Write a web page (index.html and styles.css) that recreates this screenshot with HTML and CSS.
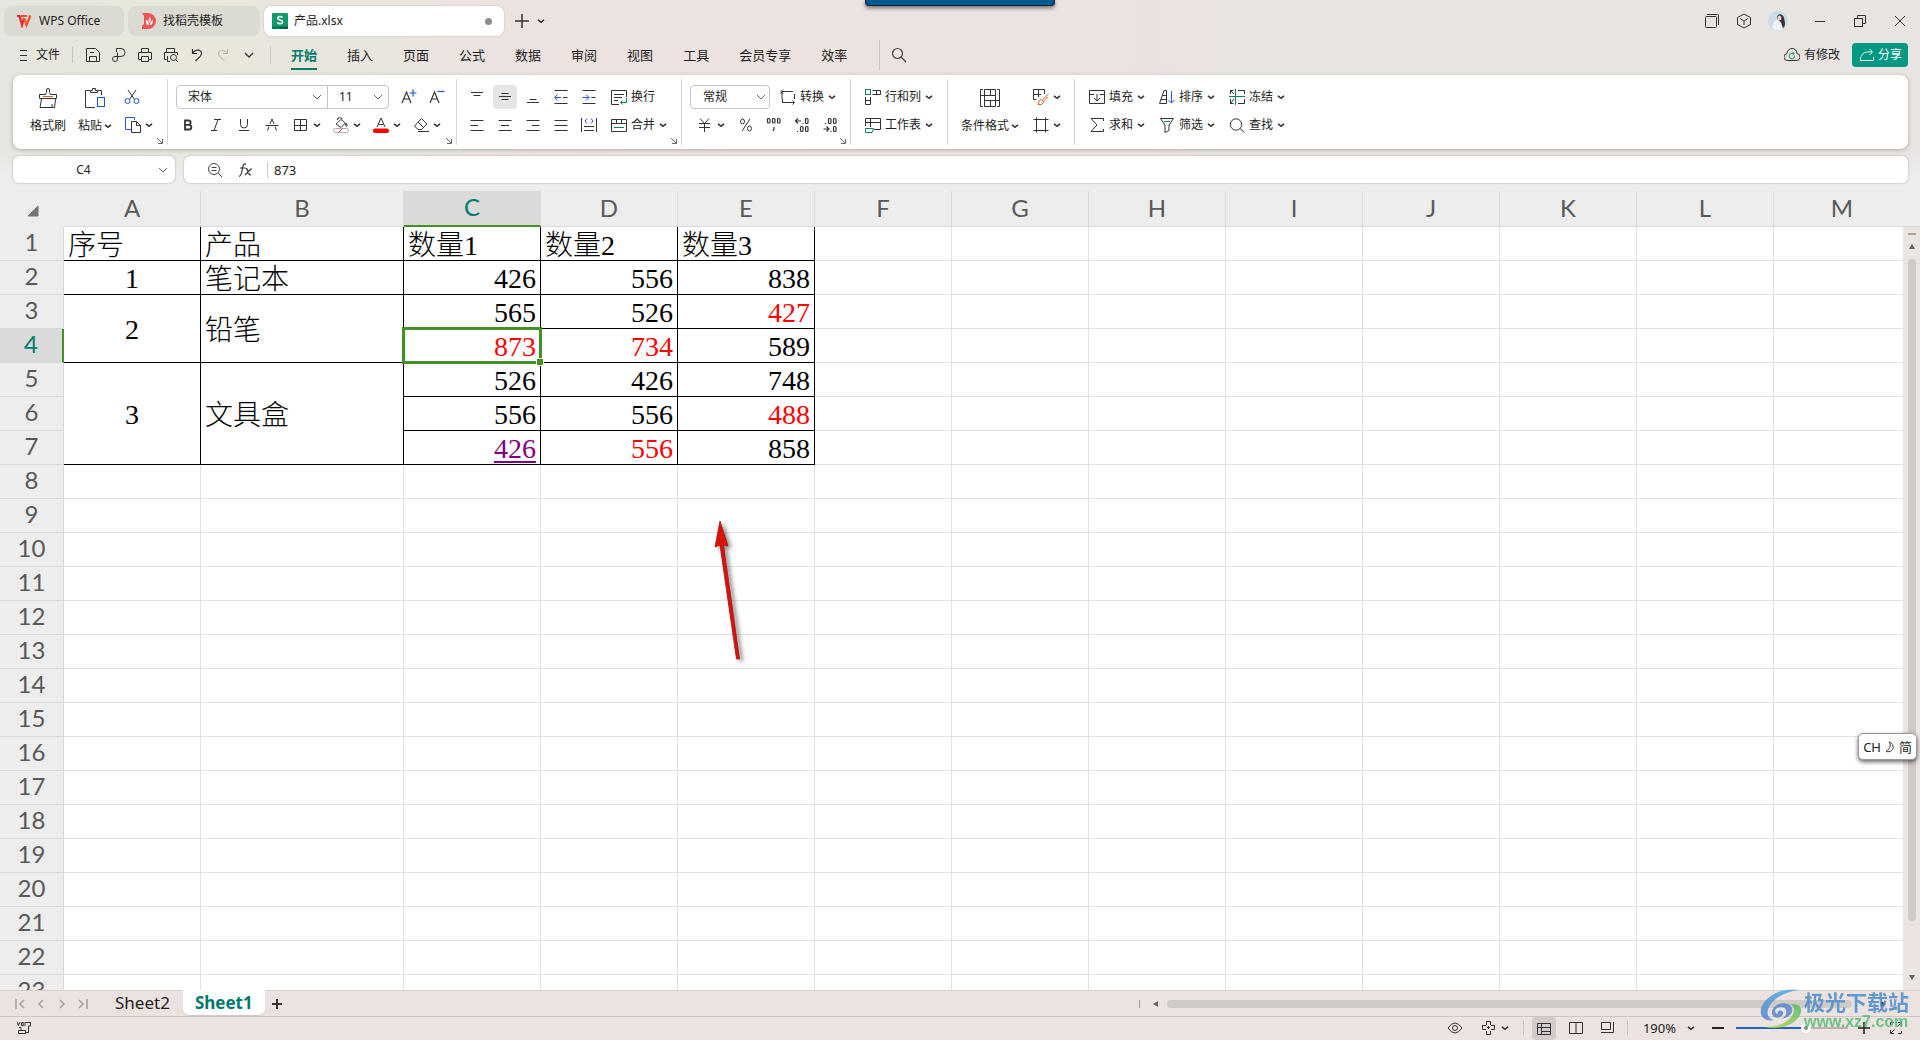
FILE: index.html
```html
<!DOCTYPE html>
<html lang="zh-CN">
<head>
<meta charset="utf-8">
<title>产品.xlsx - WPS Office</title>
<link rel="stylesheet" href="styles.css">
</head>
<body>
<svg class="defs" aria-hidden="true">
  <symbol id="caret" viewBox="0 0 8 8"><path d="M1 2.8 4 5.3 7 2.8" fill="none" stroke="#333" stroke-width="1.6"/></symbol>
  <symbol id="chev" viewBox="0 0 10 10"><path d="M1 3 5 7 9 3" fill="none" stroke="#666"/></symbol>
  <symbol id="launch" viewBox="0 0 8 8"><path d="M1 1 6 6M6.5 2V6.5H2" fill="none" stroke="#666"/></symbol>
</svg>

<header class="titlebar">
  <button class="doc-tab home"><svg width="16" height="14" viewBox="0 0 16 14" fill="none" stroke-width="2.2"><path d="M1 2H3.5L6 11 8 4" stroke="#f5222d"/><path d="M5 2H11M8 4 10.5 11 14.5 1.5" stroke="#ff4d2e"/></svg>WPS Office</button>
  <button class="doc-tab docer"><svg width="14" height="16" viewBox="0 0 14 16"><path d="M0 0H6A8 8 0 0 1 6 16H0V13L2 11V3Z" fill="#f05555"/><path d="M4 7C6 7 6.500 9 7 12 4.500 12 4 10 4 7ZM7.500 4C10 6 8.500 9 7.500 10 6.500 8 6.500 6 7.500 4ZM11 7C11 10 10 12 8 12 8 10 9 8 11 7Z" fill="#fff"/></svg>找稻壳模板</button>
  <button class="doc-tab active"><svg width="16" height="16" viewBox="0 0 16 16"><rect width="16" height="16" rx="1" fill="#12996a"/><path d="M0 13.500H8V16H0Z" fill="#0b7a50"/><path d="M8 13.500H16V16H8Z" fill="#076040"/><path d="M10.500 4.500C9.500 3 5.800 3 5.800 5.200 5.800 7.600 10.500 6.300 10.500 8.900 10.500 11.200 6.500 11.200 5.500 9.500" fill="none" stroke="#fff" stroke-width="1.600"/></svg>产品.xlsx<i class="dot"></i></button>
  <button class="plain" aria-label="新建"><svg width="14" height="14" viewBox="0 0 14 14" fill="none" stroke="#333" stroke-width="1.500"><path d="M7 0V14M0 7H14"/></svg></button>
  <button class="plain" aria-label="标签列表"><svg width="8" height="8"><use href="#caret"/></svg></button>
  <div class="window-tools">
    <button class="plain" aria-label="窗口"><svg width="16" height="16" viewBox="0 0 16 16" fill="none" stroke="#333"><rect x="1.500" y="3.500" width="11" height="11" rx="1"/><path d="M3 1.500H13.500Q14.500 1.500 14.500 2.500V12"/></svg></button>
    <button class="plain" aria-label="应用"><svg width="16" height="16" viewBox="0 0 16 16" fill="none" stroke="#333"><path d="M8 1 14.500 4.500V11.500L8 15 1.500 11.500V4.500ZM4 5.500 8 8 12 5.500M8 8V12"/></svg></button>
    <button class="plain" aria-label="账户"><svg width="20" height="20" viewBox="0 0 20 20"><circle cx="10" cy="10" r="10" fill="#c9dbe4"/><path d="M4 17C5 11 7 8 11 9L15 11 14 19A10 10 0 0 1 4 17Z" fill="#eef3f6"/><path d="M9 7C9 2 15 2 16 7 17 11 18 15 15 17 13 13 14 11 11 10Z" fill="#3b2f38"/><ellipse cx="11.500" cy="7" rx="2" ry="2.500" fill="#ecd2c6"/></svg></button>
    <button class="plain" aria-label="最小化"><svg width="16" height="16" viewBox="0 0 16 16" stroke="#333"><path d="M3 8.500H13"/></svg></button>
    <button class="plain" aria-label="还原"><svg width="16" height="16" viewBox="0 0 16 16" fill="none" stroke="#333"><rect x="2.500" y="5.500" width="8" height="8"/><path d="M5.500 5V2.500H13.500V10.500H11"/></svg></button>
    <button class="plain" aria-label="关闭"><svg width="16" height="16" viewBox="0 0 16 16" stroke="#333"><path d="M3 3 13 13M13 3 3 13"/></svg></button>
  </div>
  <div class="drop-handle"></div>
</header>

<nav class="menubar">
  <button class="file"><svg width="10" height="12" viewBox="0 0 10 12" stroke="#333"><path d="M1 1.500H8M1 6.500H8M1 11.500H8"/></svg>文件</button>
  <div class="quick">
    <button class="plain" aria-label="保存"><svg width="16" height="16" viewBox="0 0 16 16" fill="none" stroke="#333"><path d="M1.500 1.500H10.500L14.500 5.500V14.500H1.500ZM4.500 14V9.500H11.500V14M5 5.500H9"/></svg></button>
    <button class="plain" aria-label="输出为PDF"><svg width="16" height="16" viewBox="0 0 16 16" fill="none" stroke="#333"><path d="M5.500 5V1.500H10A4 4 0 0 1 10 9.500H4A2.500 2.500 0 1 0 6.500 12V5.500"/></svg></button>
    <button class="plain" aria-label="打印"><svg width="16" height="16" viewBox="0 0 16 16" fill="none" stroke="#333"><path d="M4.500 5V1.500H11.500V5M4 12.500H1.500V5.500H14.500V12.500H12M4.500 9.500H11.500V14.500H4.500Z"/></svg></button>
    <button class="plain" aria-label="打印预览"><svg width="16" height="16" viewBox="0 0 16 16" fill="none" stroke="#333"><path d="M3.500 5V1.500H11.500V5M3.500 12.500H1.500V5.500H14.500V8M4.500 9V14.500H7"/><circle cx="10.500" cy="10.500" r="3"/><path d="M13 13 15 15"/></svg></button>
    <button class="plain" aria-label="撤销"><svg width="16" height="16" viewBox="0 0 16 16" fill="none" stroke="#333" stroke-width="1.200"><path d="M3.500 2V6.500H8M3.500 6.500C6 2 13 2 12.500 7 12 10 9 11 6.500 14"/></svg></button>
    <button class="plain" aria-label="恢复"><svg width="16" height="16" viewBox="0 0 16 16" fill="none" stroke="#b8b5b1"><path d="M12.500 2V6.500H8M12.500 6.500C10 2 3 2 3.500 7 4 10 7 11 9.500 14"/></svg></button>
    <button class="plain" aria-label="更多"><svg width="10" height="10" viewBox="0 0 10 10"><path d="M1 3 5 7 9 3" fill="none" stroke="#333" stroke-width="1.300"/></svg></button>
  </div>
  <div class="menus">
    <button class="current">开始</button><button>插入</button><button>页面</button><button>公式</button><button>数据</button><button>审阅</button><button>视图</button><button>工具</button><button>会员专享</button><button>效率</button>
  </div>
  <button class="plain search" aria-label="搜索"><svg width="18" height="18" viewBox="0 0 18 18" fill="none" stroke="#444" stroke-width="1.200"><circle cx="7.500" cy="7.500" r="5"/><path d="M11 11 16 16"/></svg></button>
  <div class="menu-right">
    <button class="changed"><svg width="16" height="14" viewBox="0 0 16 14" fill="none" stroke="#333"><path d="M4 12.500A3.500 3.500 0 0 1 3 5.500 5 5 0 0 1 13 5.500 3.500 3.500 0 0 1 12 12.500Z"/><path d="M10.500 7.500A2.700 2.700 0 1 1 8.500 5.500L10 5.500M8.500 3.800 10.200 5.500 8.500 7" stroke="#12905f"/></svg>有修改</button>
    <button class="share"><svg width="14" height="14" viewBox="0 0 14 14" fill="none" stroke="#fff"><path d="M.5 9V12.500H13.500V9M1.500 8.500C2 5 5 3.500 12 4M9.500 1 12.500 4 9.500 7"/></svg>分享</button>
  </div>
</nav>

<section class="ribbon">
  <div class="group clip">
    <button class="big"><svg width="20" height="20" viewBox="0 0 20 20" fill="none" stroke="#333"><path d="M1.500 6.500H7.500L8.500 4.500V2A1.500 1.500 0 0 1 11.500 2V4.500L12.500 6.500H18.500V10.500H1.500ZM3.500 11 2 19.500H16.500L17.500 11M14 19V16"/><path d="M5 8.500H15" stroke="#d9622b"/></svg>格式刷</button>
    <button class="big"><svg width="20" height="20" viewBox="0 0 20 20" fill="none" stroke="#333"><path d="M5 2.500H.5V19.500H10M13 2.500H16.500V7M5.500 4.500V2.500H7.500V.5H10.500V2.500H12.500V4.500Z"/><rect x="12.500" y="9.500" width="7" height="9" stroke="#1f55d6" fill="#fff"/></svg><span>粘贴<svg width="8" height="8"><use href="#caret"/></svg></span></button>
    <div class="stack">
      <button class="tool" aria-label="剪切"><svg width="16" height="16" viewBox="0 0 16 16" fill="none" stroke="#333"><path d="M4 1 10.500 10.500M12 1 5.500 10.500"/><g stroke="#1f55d6"><circle cx="3.500" cy="12" r="2.500"/><circle cx="12.500" cy="12" r="2.500"/></g></svg></button>
      <button class="tool drop" aria-label="复制"><svg width="16" height="16" viewBox="0 0 16 16" fill="none" stroke="#333"><path d="M6 12.500H.5V.5H9.500V3" stroke="#1f55d6"/><path d="M6.500 4.500H11.500L15.500 8.500V15.500H6.500ZM11.500 4.500V8.500H15.500"/></svg><svg width="8" height="8"><use href="#caret"/></svg></button>
    </div>
    <button class="launcher" aria-label="剪贴板设置"><svg width="8" height="8"><use href="#launch"/></svg></button>
  </div>

  <div class="group font">
    <div class="stack">
      <div class="row">
        <div class="font-box">
          <label class="combo family"><select aria-label="字体"><option>宋体</option></select><svg width="10" height="10"><use href="#chev"/></svg></label>
          <label class="combo size"><select aria-label="字号"><option>11</option></select><svg width="10" height="10"><use href="#chev"/></svg></label>
        </div>
        <button class="tool" aria-label="增大字号"><svg width="16" height="16" viewBox="0 0 16 16" fill="none" stroke="#333" stroke-width="1.200"><path d="M1 14 5.500 3 10 14M2.500 10H8.500"/><path d="M8.500 4H15.500M12 .5V7.500" stroke="#1f55d6"/></svg></button>
        <button class="tool" aria-label="减小字号"><svg width="16" height="16" viewBox="0 0 16 16" fill="none" stroke="#333" stroke-width="1.200"><path d="M1 14 5.500 3 10 14M2.500 10H8.500"/><path d="M8.500 2.500H15.500" stroke="#1f55d6"/></svg></button>
      </div>
      <div class="row">
        <button class="tool" aria-label="加粗"><svg width="16" height="16" viewBox="0 0 16 16" fill="none" stroke="#333" stroke-width="1.800"><path d="M5 3.500H8.500A2 2 0 0 1 8.500 7.800H5ZM5 7.800H9A2.300 2.300 0 0 1 9 12.500H5Z"/></svg></button>
        <button class="tool" aria-label="倾斜"><svg width="16" height="16" viewBox="0 0 16 16" fill="none" stroke="#333"><path d="M6 2.500H13M3 13.500H9M10 2.500 6 13.500"/></svg></button>
        <button class="tool" aria-label="下划线"><svg width="16" height="16" viewBox="0 0 16 16" fill="none" stroke="#333"><path d="M4.500 2V7.500A3.500 3.500 0 0 0 11.500 7.500V2M3 13.500H13"/></svg></button>
        <button class="tool" aria-label="删除线"><svg width="16" height="16" viewBox="0 0 16 16" fill="none" stroke="#333"><path d="M6 7 8 2 10 7M5 9.500 3.500 13.500M11 9.500 12.500 13.500M1.500 8.500H14.500"/></svg></button>
        <button class="tool drop" aria-label="边框"><svg width="16" height="16" viewBox="0 0 16 16" fill="none" stroke="#333"><path d="M1.500 2.500H13.500V13.500H1.500ZM7.500 2.500V13.500M1.500 8.500H13.500"/></svg><svg width="8" height="8"><use href="#caret"/></svg></button>
        <button class="tool drop" aria-label="填充颜色"><svg width="16" height="16" viewBox="0 0 16 16" fill="none" stroke="#333"><path d="M4.500 3V1.500Q7.500-.5 9.500 2M8 2.500 3 7 8 10.500 12.500 6ZM13 6Q15 9 13.500 9.500 12 9 13 6"/><rect x=".5" y="11.500" width="15" height="4" rx="2" stroke="#aaa"/><path d="M6 15 9 12" stroke="#e33"/></svg><svg width="8" height="8"><use href="#caret"/></svg></button>
        <button class="tool drop" aria-label="字体颜色"><svg width="16" height="16" viewBox="0 0 16 16" fill="none" stroke="#333"><path d="M4 10 8 1 12 10M5.500 7.500H10.500"/><rect x="0" y="11.500" width="16" height="4.500" rx="2" fill="red" stroke="none"/></svg><svg width="8" height="8"><use href="#caret"/></svg></button>
        <button class="tool drop" aria-label="清除"><svg width="16" height="16" viewBox="0 0 16 16" fill="none" stroke="#333"><path d="M8.500 1.500 14 7 8.500 12.500H5L1.500 9ZM5 5 10.500 10.500M5 14.500H16"/></svg><svg width="8" height="8"><use href="#caret"/></svg></button>
      </div>
    </div>
    <button class="launcher" aria-label="字体设置"><svg width="8" height="8"><use href="#launch"/></svg></button>
  </div>

  <div class="group">
    <div class="stack">
      <div class="row">
        <button class="tool" aria-label="顶端对齐"><svg width="16" height="16" viewBox="0 0 16 16" stroke="#333"><path d="M2 3.500H14M4.500 6.500H11.500"/></svg></button>
        <button class="tool on" aria-label="垂直居中"><svg width="16" height="16" viewBox="0 0 16 16" stroke="#333"><path d="M4.500 4.500H11.500M2 7.500H14M4.500 10.500H11.500"/></svg></button>
        <button class="tool" aria-label="底端对齐"><svg width="16" height="16" viewBox="0 0 16 16" stroke="#333"><path d="M4.500 10.500H11.500M2 13.500H14"/></svg></button>
        <button class="tool" aria-label="减少缩进"><svg width="16" height="16" viewBox="0 0 16 16" fill="none" stroke="#333"><path d="M1.500 1.500H14.500M1.500 14.500H14.500M10 8.500H14.500"/><path d="M2 8.500H8M4.500 5.500 1.700 8.500 4.500 11.500" stroke="#1f55d6"/></svg></button>
        <button class="tool" aria-label="增加缩进"><svg width="16" height="16" viewBox="0 0 16 16" fill="none" stroke="#333"><path d="M1.500 1.500H14.500M1.500 14.500H14.500M10.500 8.500H14.500"/><path d="M1.500 8.500H8M5 5.500 8 8.500 5 11.500" stroke="#1f55d6"/></svg></button>
        <button class="tool text"><svg width="16" height="16" viewBox="0 0 16 16" fill="none" stroke="#333"><path d="M8 15.500H.5V1.500H15.500V8M3 5.500H13M3 8.500H11M3 11.500H7"/><path d="M15.500 9V13.500H9.500M11.500 11.500 9.500 13.500 11.500 15.500" stroke="#12805c"/></svg>换行</button>
      </div>
      <div class="row">
        <button class="tool" aria-label="左对齐"><svg width="16" height="16" viewBox="0 0 16 16" stroke="#333"><path d="M1.500 3.500H14.500M1.500 8.500H9M1.500 13.500H14.500"/></svg></button>
        <button class="tool" aria-label="水平居中"><svg width="16" height="16" viewBox="0 0 16 16" stroke="#333"><path d="M1.500 3.500H14.500M4 8.500H12M1.500 13.500H14.500"/></svg></button>
        <button class="tool" aria-label="右对齐"><svg width="16" height="16" viewBox="0 0 16 16" stroke="#333"><path d="M1.500 3.500H14.500M7 8.500H14.500M1.500 13.500H14.500"/></svg></button>
        <button class="tool" aria-label="两端对齐"><svg width="16" height="16" viewBox="0 0 16 16" stroke="#333"><path d="M1.500 3.500H14.500M1.500 8.500H14.500M1.500 13.500H14.500"/></svg></button>
        <button class="tool" aria-label="分散对齐"><svg width="16" height="16" viewBox="0 0 16 16" fill="none" stroke="#333"><path d="M.5 1V15M15.500 1V15M3 9.500H13M3 13.500H13"/><path d="M6 1.500 4 4 6 6.500M10 1.500 12 4 10 6.500" stroke="#1f55d6"/></svg></button>
        <button class="tool text"><svg width="16" height="16" viewBox="0 0 16 16" fill="none" stroke="#333"><path d="M.5 2.500H15.500V14.500H.5ZM.5 6.500H15.500M5.500 2V6M10.500 2V6"/><path d="M3 10.500H13" stroke="#12805c"/></svg>合并<svg width="8" height="8"><use href="#caret"/></svg></button>
      </div>
    </div>
    <button class="launcher" aria-label="对齐设置"><svg width="8" height="8"><use href="#launch"/></svg></button>
  </div>

  <div class="group number">
    <div class="stack">
      <div class="row">
        <label class="combo format"><select aria-label="数字格式"><option>常规</option></select><svg width="10" height="10"><use href="#chev"/></svg></label>
        <button class="tool text"><svg width="16" height="16" viewBox="0 0 16 16" fill="none" stroke="#333"><path d="M2 10V2.500H13M2.500 10V13.500H14M14.500 5V10M.5 4.500 2.500 2.500M3 .5 1 2.500 3 4.500M12.500 11.500 14.500 13.500 12.500 15.500"/></svg>转换<svg width="8" height="8"><use href="#caret"/></svg></button>
      </div>
      <div class="row">
        <button class="tool drop" aria-label="货币"><svg width="16" height="16" viewBox="0 0 16 16" fill="none" stroke="#333"><path d="M3 1.500 7.500 6.500 12 1.500M2 6.500H13M2 10.500H13M7.500 6.500V15"/></svg><svg width="8" height="8"><use href="#caret"/></svg></button>
        <div class="row digits">
          <button class="tool" aria-label="百分比"><svg width="16" height="16" viewBox="0 0 16 16" fill="none" stroke="#333"><path d="M12 2 4 14"/><ellipse cx="4.500" cy="4.500" rx="2" ry="2.500"/><ellipse cx="11.500" cy="11.500" rx="2" ry="2.500"/></svg></button>
          <button class="tool" aria-label="千位分隔"><svg width="16" height="16" viewBox="0 0 16 16" fill="none" stroke="#333" stroke-width="1.200"><rect x="1.500" y="1.500" width="2.500" height="4.500" rx="1"/><rect x="6.500" y="1.500" width="2.500" height="4.500" rx="1"/><rect x="11.500" y="1.500" width="2.500" height="4.500" rx="1"/><path d="M8 10V12L7 14"/></svg></button>
          <button class="tool" aria-label="增加小数位"><svg width="16" height="16" viewBox="0 0 16 16" fill="none" stroke="#333" stroke-width="1.200"><path d="M1.500 4H7M4 1.500 1.500 4 4 6.500M9 6V7M3.500 14V15"/><rect x="11.500" y="1.500" width="2.500" height="5" rx="1"/><rect x="6.500" y="9.500" width="2.500" height="5" rx="1"/><rect x="11.500" y="9.500" width="2.500" height="5" rx="1"/></svg></button>
          <button class="tool" aria-label="减少小数位"><svg width="16" height="16" viewBox="0 0 16 16" fill="none" stroke="#333" stroke-width="1.200"><path d="M1.500 12H7M4.500 9.500 7 12 4.500 14.500M9 14V15M3.500 6V7"/><rect x="11.500" y="9.500" width="2.500" height="5" rx="1"/><rect x="6.500" y="1.500" width="2.500" height="5" rx="1"/><rect x="11.500" y="1.500" width="2.500" height="5" rx="1"/></svg></button>
        </div>
      </div>
    </div>
    <button class="launcher" aria-label="数字设置"><svg width="8" height="8"><use href="#launch"/></svg></button>
  </div>

  <div class="group">
    <div class="stack">
      <button class="tool text"><svg width="16" height="16" viewBox="0 0 16 16" fill="none" stroke="#333"><path d="M7.500 1.500H15.500V5.500H7.500M11.500 1.500V5.500M.5 8V15.500H5.500V8M.5 11.500H5.500"/><rect x=".5" y=".5" width="5" height="5" stroke="#12805c"/></svg>行和列<svg width="8" height="8"><use href="#caret"/></svg></button>
      <button class="tool text"><svg width="16" height="16" viewBox="0 0 16 16" fill="none" stroke="#333"><path d="M.5 9V1.500H15.500V12.500H9M.5 5.500H15.500M5.500 1.500V10"/><path d="M.5 11.500H8.500L7 15.500H.5Z" stroke="#12805c"/></svg>工作表<svg width="8" height="8"><use href="#caret"/></svg></button>
    </div>
  </div>

  <div class="group">
    <button class="big wide"><svg width="20" height="20" viewBox="0 0 20 20" fill="none" stroke="#333"><path d="M3 1.500H.5V18.500H3M17 1.500H19.500V18.500H17M4.500 1.500H15.500V18.500H4.500ZM.5 7.500H15.500M4.500 12.500H19.500M10.500 1.500V7.500M10.500 12.500V18.500"/></svg><span>条件格式<svg width="8" height="8"><use href="#caret"/></svg></span></button>
    <div class="stack">
      <button class="tool drop" aria-label="表格样式"><svg width="16" height="16" viewBox="0 0 16 16" fill="none" stroke="#333"><path d="M3.500 10.500H.5V.5H11.500V5M.5 5.500H8M5.500 .5V8"/><path d="M15.500 5 9.500 10.500M15 8 10.500 12M5 15.500Q6 14 6.500 11.500 8 9.500 10 11.500 11.500 14 8.500 15.500Z" stroke="#d9622b"/></svg><svg width="8" height="8"><use href="#caret"/></svg></button>
      <button class="tool drop" aria-label="单元格样式"><svg width="16" height="16" viewBox="0 0 16 16" fill="none" stroke="#333"><path d="M3.500 .5V15.500M12.500 .5V15.500M.5 2.500H15.500M.5 13.500H15.500"/></svg><svg width="8" height="8"><use href="#caret"/></svg></button>
    </div>
  </div>

  <div class="group last">
    <div class="stack">
      <div class="row">
        <button class="tool text"><svg width="16" height="16" viewBox="0 0 16 16" fill="none" stroke="#333"><path d="M5 5.500H.5V1.500H15.500V5.500H11M.5 5V14.500H15.500V5M8 5V12M5 9 8 12 11 9"/></svg>填充<svg width="8" height="8"><use href="#caret"/></svg></button>
        <button class="tool text"><svg width="16" height="16" viewBox="0 0 16 16" fill="none" stroke="#333"><path d="M.5 14.500 5 1.500H7.500V14.500ZM2 10.500H7M3.500 6.500H7"/><path d="M12.500 2V14M9.500 11 12.500 14 15.500 11" stroke="#1f55d6"/></svg>排序<svg width="8" height="8"><use href="#caret"/></svg></button>
        <button class="tool text"><svg width="16" height="16" viewBox="0 0 16 16" fill="none" stroke="#333"><path d="M9 1.500H15.500V5M15.500 10V14.500H9M4.500 1.500H1.500V5M1.500 10V14.500H4.500M1.500 1.500 5 5M1.500 14.500 5 10"/><path d="M0 7.500H16M6.500 0V16" stroke="#12805c"/></svg>冻结<svg width="8" height="8"><use href="#caret"/></svg></button>
      </div>
      <div class="row">
        <button class="tool text"><svg width="16" height="16" viewBox="0 0 16 16" fill="none" stroke="#333"><path d="M14.500 4V1.500H2L8 8 2 14.500H14.500V12"/></svg>求和<svg width="8" height="8"><use href="#caret"/></svg></button>
        <button class="tool text"><svg width="16" height="16" viewBox="0 0 16 16" fill="none" stroke="#333"><path d="M1.500 1.500H14.500L10 8V13.500L6 15.500V8Z"/><path d="M5 4.500H11" stroke="#12805c"/></svg>筛选<svg width="8" height="8"><use href="#caret"/></svg></button>
        <button class="tool text"><svg width="16" height="16" viewBox="0 0 16 16" fill="none" stroke="#333"><circle cx="7" cy="7.500" r="5.700"/><path d="M11 11.500 15.500 15.500"/></svg>查找<svg width="8" height="8"><use href="#caret"/></svg></button>
      </div>
    </div>
  </div>
</section>

<section class="formula-row">
  <label class="name-box"><input type="text" value="C4" aria-label="名称框"><svg width="10" height="10"><use href="#chev"/></svg></label>
  <div class="formula-box">
    <svg width="16" height="16" viewBox="0 0 16 16" fill="none" stroke="#444"><circle cx="7" cy="7" r="5.500"/><path d="M11 11 15 15M4.500 5.500H9.500M4.500 8.500H9.500"/></svg>
    <svg width="16" height="16" viewBox="0 0 16 16" fill="none" stroke="#333" stroke-width="1.200"><path d="M9 2.500C7 1 6 3 5.500 6 5 10 4.500 14 2 14.500M3 6H8M8.500 6.500Q10 6 11 9.500T14 13M14.500 6.500 8 13"/></svg>
    <input type="text" value="873" aria-label="编辑栏">
  </div>
</section>

<main class="workspace">
  <div class="grid-view">
    <table class="sheet">
      <colgroup><col class="c-head"><col class="c"><col class="c-b"><col class="c"><col class="c"><col class="c"><col class="c"><col class="c"><col class="c"><col class="c"><col class="c"><col class="c"><col class="c"><col class="c"></colgroup>
      <thead><tr><th class="corner"><svg width="12" height="12" viewBox="0 0 12 12"><path d="M11 1V11H1Z" fill="#767676" stroke="#767676" stroke-linejoin="round"/></svg></th><th>A</th><th>B</th><th class="sel">C</th><th>D</th><th>E</th><th>F</th><th>G</th><th>H</th><th>I</th><th>J</th><th>K</th><th>L</th><th>M</th></tr></thead>
      <tbody>
        <tr><th>1</th><td class="d">序号</td><td class="d">产品</td><td class="d">数量1</td><td class="d">数量2</td><td class="d">数量3</td><td></td><td></td><td></td><td></td><td></td><td></td><td></td><td></td></tr>
        <tr><th>2</th><td class="d mid">1</td><td class="d">笔记本</td><td class="d num">426</td><td class="d num">556</td><td class="d num">838</td><td></td><td></td><td></td><td></td><td></td><td></td><td></td><td></td></tr>
        <tr><th>3</th><td class="d mid" rowspan="2">2</td><td class="d" rowspan="2">铅笔</td><td class="d num">565</td><td class="d num">526</td><td class="d num red">427</td><td></td><td></td><td></td><td></td><td></td><td></td><td></td><td></td></tr>
        <tr><th class="sel">4</th><td class="d num red cursor">873</td><td class="d num red">734</td><td class="d num">589</td><td></td><td></td><td></td><td></td><td></td><td></td><td></td><td></td></tr>
        <tr><th>5</th><td class="d mid" rowspan="3">3</td><td class="d" rowspan="3">文具盒</td><td class="d num">526</td><td class="d num">426</td><td class="d num">748</td><td></td><td></td><td></td><td></td><td></td><td></td><td></td><td></td></tr>
        <tr><th>6</th><td class="d num">556</td><td class="d num">556</td><td class="d num red">488</td><td></td><td></td><td></td><td></td><td></td><td></td><td></td><td></td></tr>
        <tr><th>7</th><td class="d num"><a href="#">426</a></td><td class="d num red">556</td><td class="d num">858</td><td></td><td></td><td></td><td></td><td></td><td></td><td></td><td></td></tr>
        <tr><th>8</th><td></td><td></td><td></td><td></td><td></td><td></td><td></td><td></td><td></td><td></td><td></td><td></td><td></td></tr>
        <tr><th>9</th><td></td><td></td><td></td><td></td><td></td><td></td><td></td><td></td><td></td><td></td><td></td><td></td><td></td></tr>
        <tr><th>10</th><td></td><td></td><td></td><td></td><td></td><td></td><td></td><td></td><td></td><td></td><td></td><td></td><td></td></tr>
        <tr><th>11</th><td></td><td></td><td></td><td></td><td></td><td></td><td></td><td></td><td></td><td></td><td></td><td></td><td></td></tr>
        <tr><th>12</th><td></td><td></td><td></td><td></td><td></td><td></td><td></td><td></td><td></td><td></td><td></td><td></td><td></td></tr>
        <tr><th>13</th><td></td><td></td><td></td><td></td><td></td><td></td><td></td><td></td><td></td><td></td><td></td><td></td><td></td></tr>
        <tr><th>14</th><td></td><td></td><td></td><td></td><td></td><td></td><td></td><td></td><td></td><td></td><td></td><td></td><td></td></tr>
        <tr><th>15</th><td></td><td></td><td></td><td></td><td></td><td></td><td></td><td></td><td></td><td></td><td></td><td></td><td></td></tr>
        <tr><th>16</th><td></td><td></td><td></td><td></td><td></td><td></td><td></td><td></td><td></td><td></td><td></td><td></td><td></td></tr>
        <tr><th>17</th><td></td><td></td><td></td><td></td><td></td><td></td><td></td><td></td><td></td><td></td><td></td><td></td><td></td></tr>
        <tr><th>18</th><td></td><td></td><td></td><td></td><td></td><td></td><td></td><td></td><td></td><td></td><td></td><td></td><td></td></tr>
        <tr><th>19</th><td></td><td></td><td></td><td></td><td></td><td></td><td></td><td></td><td></td><td></td><td></td><td></td><td></td></tr>
        <tr><th>20</th><td></td><td></td><td></td><td></td><td></td><td></td><td></td><td></td><td></td><td></td><td></td><td></td><td></td></tr>
        <tr><th>21</th><td></td><td></td><td></td><td></td><td></td><td></td><td></td><td></td><td></td><td></td><td></td><td></td><td></td></tr>
        <tr><th>22</th><td></td><td></td><td></td><td></td><td></td><td></td><td></td><td></td><td></td><td></td><td></td><td></td><td></td></tr>
        <tr><th>23</th><td></td><td></td><td></td><td></td><td></td><td></td><td></td><td></td><td></td><td></td><td></td><td></td><td></td></tr>
      </tbody>
    </table>
    <svg class="arrow" width="40" height="150" viewBox="0 0 40 150"><path d="M10 1 5 27 10 25 26.500 139 29.500 139 13.500 25 18 26Z" fill="#d6140f" stroke="#b00d0a" stroke-width=".8"/></svg>
  </div>
  <div class="vscroll"><i class="split"></i><svg width="8" height="6" viewBox="0 0 8 6"><path d="M4 0 7 5H1Z" fill="#666"/></svg><i class="thumb"></i><svg width="8" height="6" viewBox="0 0 8 6"><path d="M4 5 7 0H1Z" fill="#666"/></svg></div>
  <div class="ime">CH<svg width="10" height="12" viewBox="0 0 10 12" fill="none" stroke="#333"><path d="M4 1C6 3 6 7 1 10.500 5 11.500 9 9 8 5 7.500 2.500 6 1.500 4 1Z"/></svg>简</div>
</main>

<footer class="sheetbar">
  <div class="sheet-nav">
    <button class="plain" aria-label="第一张"><svg width="10" height="10" viewBox="0 0 10 10" fill="none" stroke="#a39d9b" stroke-width="1.500"><path d="M1 0V10M9 1 5 5 9 9"/></svg></button>
    <button class="plain" aria-label="上一张"><svg width="10" height="10" viewBox="0 0 10 10" fill="none" stroke="#a39d9b" stroke-width="1.500"><path d="M7 1 3 5 7 9"/></svg></button>
    <button class="plain" aria-label="下一张"><svg width="10" height="10" viewBox="0 0 10 10" fill="none" stroke="#a39d9b" stroke-width="1.500"><path d="M3 1 7 5 3 9"/></svg></button>
    <button class="plain" aria-label="最后一张"><svg width="10" height="10" viewBox="0 0 10 10" fill="none" stroke="#a39d9b" stroke-width="1.500"><path d="M1 1 5 5 1 9M9 0V10"/></svg></button>
  </div>
  <button class="sheet-tab">Sheet2</button>
  <button class="sheet-tab active">Sheet1</button>
  <button class="plain add" aria-label="新建工作表"><svg width="10" height="10" viewBox="0 0 10 10" stroke="#333" stroke-width="2"><path d="M5 0V10M0 5H10"/></svg></button>
  <div class="hscroll"><i class="split"></i><svg width="6" height="8" viewBox="0 0 6 8"><path d="M0 4 5 1V7Z" fill="#666"/></svg><i class="thumb"></i><svg width="6" height="8" viewBox="0 0 6 8"><path d="M6 4 1 1V7Z" fill="#333"/></svg></div>
</footer>

<footer class="status">
  <svg width="14" height="14" viewBox="0 0 14 14" fill="none" stroke="#333"><path d="M0 1 1.500 4.500 3 1M4.500 1.500H6.500L6 3 6.500 4.500H4.500ZM8 5V1.500H13.500V5H11.500V11.500H9M2 6.500H4V9.500H1.500V12.500H8.500V9.500H4"/></svg>
  <div class="status-right">
    <button class="plain" aria-label="护眼模式"><svg width="16" height="12" viewBox="0 0 16 12" fill="none" stroke="#333"><path d="M1 6Q8-4 15 6 8 16 1 6Z"/><circle cx="8" cy="6" r="2.500"/></svg></button>
    <button class="plain focus" aria-label="阅读模式"><svg width="14" height="14" viewBox="0 0 14 14" fill="none" stroke="#333"><path d="M4.500 4V.5H8.500V4M4.500 10V13.500H8.500V10M4 4.500H.5V8.500H4M9 4.500H12.500V8.500H9M5 6.500H8M6.500 5V8"/></svg><svg width="8" height="8"><use href="#caret"/></svg></button>
    <div class="views">
      <button class="view on" aria-label="普通视图"><svg width="14" height="14" viewBox="0 0 14 14" fill="none" stroke="#333"><path d="M.5 1.500H13.500V12.500H.5ZM.5 5.500H13.500M4.500 1.500V12.500M4.500 9.500H13.500"/></svg></button>
      <button class="view" aria-label="分页预览"><svg width="14" height="14" viewBox="0 0 14 14" fill="none" stroke="#333"><path d="M.5 1.500H13.500V12.500H.5ZM7 1.500V12.500"/></svg></button>
      <button class="view" aria-label="页面布局"><svg width="14" height="14" viewBox="0 0 14 14" fill="none" stroke="#333"><path d="M.5 1.500H9.500V8.500H.5ZM12.500 1V11.500H0"/></svg></button>
    </div>
    <button class="zoom">190%<svg width="8" height="8"><use href="#caret"/></svg></button>
    <button class="plain" aria-label="缩小"><svg width="12" height="12" viewBox="0 0 12 12" stroke="#222" stroke-width="2"><path d="M0 6H12"/></svg></button>
    <input class="slider" type="range" min="0" max="100" value="64" aria-label="缩放">
    <button class="plain" aria-label="放大"><svg width="12" height="12" viewBox="0 0 12 12" stroke="#222" stroke-width="1.500"><path d="M0 6H12M6 0V12"/></svg></button>
    <button class="plain full" aria-label="全屏"><svg width="14" height="14" viewBox="0 0 14 14" fill="none" stroke="#333"><path d="M9 1.500H12.500V5M8.500 5.500 12 2M5 12.500H1.500V9M2 12 5.500 8.500M5 1.500H1.500V4M9 12.500H12.500V10"/></svg></button>
  </div>
  <div class="watermark">
    <svg width="42" height="40" viewBox="0 0 42 40"><defs><linearGradient id="wm-b" x1="1" y1="0" x2="0" y2="1"><stop offset="0" stop-color="#45b4e6"/><stop offset="1" stop-color="#5a86cf"/></linearGradient><linearGradient id="wm-g" x1="1" y1="0" x2="0" y2="1"><stop offset="0" stop-color="#4fb96c"/><stop offset="1" stop-color="#c3d84e"/></linearGradient></defs><path d="M40 1C20-2 4 8 1 20-1 28 6 33 14 31 6 29 6 22 11 15 17 7 28 2 40 1Z" fill="url(#wm-b)"/><path d="M30 16C20 10 8 20 13 27 17 31 25 27 23 23 21 20 16 22 18 25 13 24 15 18 21 18 28 18 28 27 21 30 32 28 35 21 30 16Z" fill="#5a86cf"/><path d="M31 15C43 14 44 24 36 31 28 39 15 40 5 38 18 38 28 33 32 27 35 22 34 18 31 15Z" fill="url(#wm-g)"/></svg>
    <p><b>极光下载站</b><span>www.xz7.com</span></p>
  </div>
</footer>
</body>
</html>
```

FILE: styles.css
```css
* { box-sizing: border-box; }

body {
  margin: 0;
  height: 100vh;
  display: flex;
  flex-direction: column;
  overflow: hidden;
  position: relative;
  font: 12px/16px "Noto Sans", "Noto Sans CJK SC", sans-serif;
  color: #222;
  background: linear-gradient(90deg, #e6e5df 0, #e8e7db 8%, #ece3e1 28%, #ece2e0 58%, #e8e4e1 68%, #e8e4e2 100%);
}

button, input, select { font: inherit; color: inherit; }
button { margin: 0; padding: 0; border: 0; background: none; display: flex; align-items: center; white-space: nowrap; }
svg { display: block; flex: none; }
.defs { position: absolute; width: 0; height: 0; }
.plain { justify-content: center; }

/* title bar */
.titlebar { display: flex; align-items: center; gap: 4px; height: 38px; padding: 4px 12px 0 4px; }
.doc-tab { height: 30px; border-radius: 8px; background: #dbdad3; padding: 0 12px; gap: 7px; }
.doc-tab.home { width: 120px; }
.doc-tab.docer { width: 132px; padding: 0 14px; }
.doc-tab.active { width: 240px; background: #fff; padding: 0 12px 0 8px; gap: 6px; box-shadow: 0 0 2px #b8b4ae; }
.dot { width: 7px; height: 7px; border-radius: 50%; background: #8d8d8d; margin-left: auto; }
.titlebar > .plain { width: 14px; }
.titlebar > .doc-tab + .plain { margin: 0 1px 0 7px; }
.window-tools { display: flex; gap: 24px; margin-left: auto; align-items: center; }
.window-tools .plain { width: 16px; }
.window-tools .plain:nth-child(-n+2) { margin-right: -8px; }
.window-tools .plain:nth-child(3) { width: 20px; }
.drop-handle { position: absolute; top: 0; left: 50%; width: 190px; height: 6px; margin-left: -95px; background: #005a8f; border: 1px solid #0a1a26; border-top: 0; border-radius: 0 0 4px 4px; box-shadow: 0 2px 4px #0008; }

/* menu bar */
.menubar { display: flex; align-items: center; height: 37px; padding: 0 12px 4px 19px; }
.menubar .file { gap: 7px; padding-right: 12px; height: 16px; border-right: 1px solid #c6c3be; }
.quick { display: flex; align-items: center; gap: 10px; padding: 0 13px 0 12px; border-right: 1px solid #cfccc8; }
.quick .plain { width: 16px; height: 18px; }
.menus { display: flex; gap: 30px; padding: 0 32px 0 20px; border-right: 1px solid #c9c4c2; font-size: 13px; }
.menus button { height: 30px; padding: 5px 0 2px; border-bottom: 2px solid transparent; }
.menus .current { color: #007a6b; font-weight: bold; border-color: #007a6b; }
.menubar .search { margin-left: 10px; }
.menu-right { display: flex; align-items: center; gap: 12px; margin-left: auto; }
.changed { gap: 4px; }
.share { height: 24px; padding: 0 6px 0 8px; gap: 4px; border-radius: 4px; background: #009882; color: #fff; }

/* ribbon */
.ribbon { display: flex; align-items: flex-start; margin: 0 12px 0 13px; padding: 4px 0; height: 74px; border-radius: 8px; background: #fff; box-shadow: 0 1px 4px #8a827e99; }
.group { position: relative; display: flex; height: 66px; padding: 4px 8px 0 6px; border-right: 1px solid #d4d4d4; }
.group.clip { padding: 4px 9px 0 11px; }
.group.font { padding-right: 5px; }
.group.number { padding: 4px 6px 0 8px; }
.group.number .stack { width: 154px; }
.group.last { border-right: 0; }
.stack { display: flex; flex-direction: column; }
.clip .stack { align-items: flex-start; }
.row { display: flex; align-items: center; }
.tool { height: 28px; min-width: 28px; justify-content: center; }
.tool.drop { width: 40px; gap: 4px; justify-content: flex-start; padding-left: 7px; }
.tool.text { padding: 0 6px 0 8px; gap: 4px; justify-content: flex-start; }
.tool.on { width: 24px; min-width: 24px; height: 24px; margin: 0 2px; border-radius: 4px; background: #e5e5e5; }
.big { flex-direction: column; width: 48px; height: 56px; padding: 5px 0; justify-content: space-between; }
.big + .big { width: 46px; }
.big.wide { width: 72px; }
.big span { display: flex; align-items: center; gap: 2px; }
.launcher { position: absolute; right: 3px; bottom: 0; }
.font-box { display: flex; margin: 0 6px 0 2px; border: 1px solid #c4c4c4; border-radius: 4px; }
.combo { display: flex; align-items: center; height: 22px; padding-right: 5px; }
.combo select { flex: 1; width: 0; appearance: none; border: 0; padding: 0; background: none; outline: 0; }
.combo.family { width: 151px; padding-left: 11px; border-right: 1px solid #c4c4c4; }
.combo.size { width: 60px; padding-left: 11px; }
.combo.format { width: 80px; height: 24px; margin-right: 2px; padding: 0 3px 0 12px; border: 1px solid #c4c4c4; border-radius: 4px; }
.digits { margin-left: auto; }

/* name box and formula bar */
.formula-row { display: flex; gap: 9px; padding: 7px 12px 8px 13px; background: linear-gradient(#ededed00, #ededed 70%); }
.name-box, .formula-box { display: flex; align-items: center; height: 27px; border-radius: 6px; background: #fff; box-shadow: 0 0 2px #a09a96; }
.name-box { width: 162px; padding-right: 7px; }
.formula-box { flex: 1; padding-left: 23px; gap: 14px; }
.name-box input, .formula-box input { border: 0; background: none; outline: 0; padding: 0; min-width: 0; flex: 1; }
.name-box input { text-align: center; padding-right: 4px; }
.formula-box input { border-left: 1px solid #ccc; padding-left: 6px; height: 16px; font-size: 13px; }

/* worksheet */
.workspace { flex: 1; min-height: 0; display: flex; position: relative; background: #ededed; }
.grid-view { flex: 1; min-width: 0; overflow: hidden; position: relative; background: #fff; }
.sheet { width: 1911px; table-layout: fixed; border-collapse: separate; border-spacing: 0; }
.c-head { width: 64px; }
.c { width: 137px; }
.c-b { width: 203px; }
.sheet th { height: 34px; padding: 0 0 4px; background: #ededed; border-right: 1px solid #d9d9d9; border-bottom: 1px solid #d9d9d9; color: #595959; font: 24px/28px Lato, sans-serif; }
.sheet thead th { height: 36px; padding: 0 0 2px; }
.sheet thead .corner { border-color: #ededed; }
.corner svg { margin: 6px 0 0 27px; }
.sheet th.sel { background: #dadada; color: #007a6b; }
.sheet thead th.sel { border-bottom: 2px solid #449022; }
.sheet tbody th.sel { border-right: 2px solid #449022; }
.sheet td { height: 34px; padding: 5px 4px 0; border-right: 1px solid #e1e1e1; border-bottom: 1px solid #e1e1e1; font: 300 28px/28px "Liberation Serif", "Noto Sans CJK SC", serif; color: #000; }
.sheet .d { border-color: #000; }
.sheet .mid { text-align: center; padding-top: 3px; }
.sheet .num { text-align: right; padding-top: 3px; }
.sheet .red { color: #f00; }
.sheet a { color: #800080; text-underline-offset: 3px; }
.cursor { position: relative; }
.cursor::before { content: ""; position: absolute; inset: -2px; border: 3px solid #449022; }
.cursor::after { content: ""; position: absolute; right: -3px; bottom: -3px; width: 6px; height: 6px; background: #449022; outline: 1px solid #fff; }
.arrow { position: absolute; left: 710px; top: 329px; filter: drop-shadow(3px 2px 2px #0007); }

.vscroll { width: 17px; margin-top: 35px; padding: 6px 0 9px 1px; display: flex; flex-direction: column; align-items: center; background: #ece4e0; border-top: 1px solid #d9d9d9; }
.vscroll .split { width: 8px; height: 2px; background: #aaa5a2; margin-bottom: 9px; }
.vscroll .thumb { width: 8px; flex: 1; margin: 9px 0 54px; border-radius: 4px; background: #d0cac7; }
.ime { position: absolute; right: 3px; bottom: 230px; height: 27px; padding: 0 4px; display: flex; align-items: center; gap: 4px; background: #fff; border: 1px solid #999; border-radius: 5px; box-shadow: 0 2px 4px #0009; font-size: 13px; }

/* sheet tabs */
.sheetbar { display: flex; height: 27px; padding-left: 15px; background: #ece3e0; border-top: 1px solid #d6d0cd; border-bottom: 1px solid #cfc6c4; }
.sheet-nav { display: flex; align-items: center; gap: 11px; width: 88px; }
.sheet-tab { height: 23px; padding: 0 12px; font: 17px/23px "Noto Sans", sans-serif; }
.sheet-tab.active { margin: -1px 0 0 1px; height: 25px; background: #fff; color: #007a6b; font-weight: bold; border-radius: 0 0 6px 6px; box-shadow: 0 1px 1px #cfc6c4; }
.sheetbar .add { width: 24px; }
.hscroll { display: flex; align-items: center; width: 41%; margin-left: auto; padding-right: 34px; gap: 8px; }
.hscroll .split { width: 1px; height: 8px; background: #999; margin-right: 5px; }
.hscroll .thumb { flex: 1; height: 8px; border-radius: 4px; background: #d0cac7; margin-right: 20px; }

/* status bar */
.status { display: flex; align-items: center; height: 23px; padding: 0 17px 1px; background: #ece3e0; position: relative; }
.status-right { display: flex; align-items: center; margin-left: auto; }
.focus { gap: 5px; margin: 0 14px 0 19px; }
.views { display: flex; gap: 8px; padding: 0 7px 0 8px; border-left: 1px solid #c9c0be; border-right: 1px solid #c9c0be; }
.view { width: 24px; height: 14px; justify-content: center; }
.view.on { height: 23px; margin: -4px 0 -5px; border-radius: 4px; background: #d3cbc9; }
.zoom { font-size: 13px; gap: 11px; margin: 0 17px 0 15px; }
.slider { appearance: none; width: 112px; height: 10px; margin: 0 10px 0 12px; background: linear-gradient(#1f62c8, #1f62c8) left center / 62% 2px no-repeat, linear-gradient(#bbb3b1, #bbb3b1) center / 100% 2px no-repeat; }
.slider::-webkit-slider-thumb { appearance: none; width: 10px; height: 10px; border-radius: 50%; border: 3px solid #fff; background: #888; }
.full { margin-left: 19px; }
.watermark { position: absolute; right: 11px; bottom: 9px; display: flex; gap: 2px; opacity: .85; pointer-events: none; }
.watermark p { margin: 0; display: flex; flex-direction: column; }
.watermark b { font: bold 21px/24px "Noto Sans CJK SC", sans-serif; color: #4c8ccd; }
.watermark span { font: bold 16px/18px "Liberation Sans", sans-serif; color: #55bd78; }
```
